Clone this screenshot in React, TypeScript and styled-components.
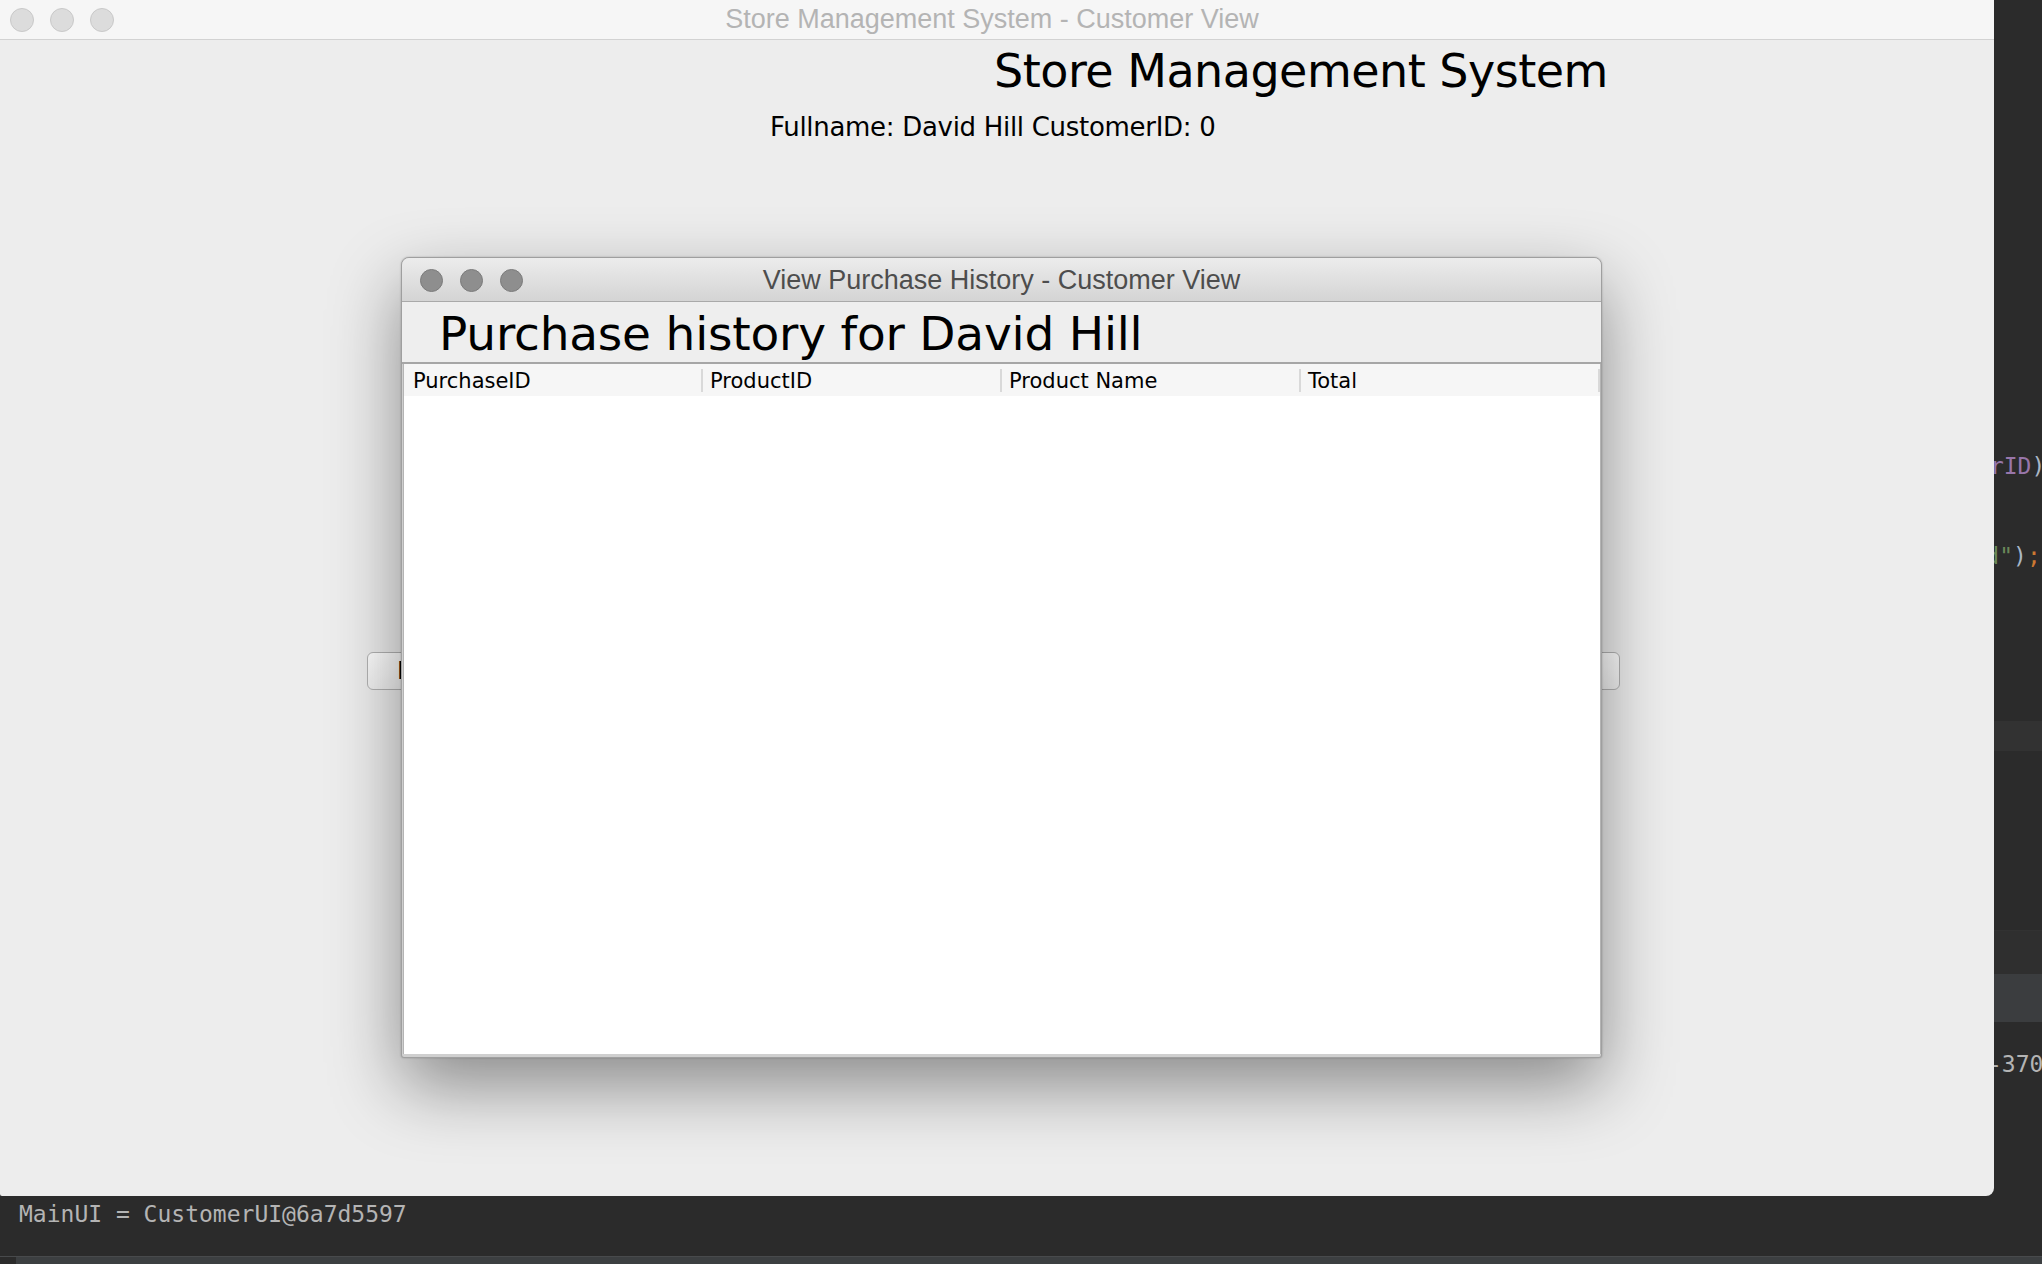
import React from "react";
import styled, { createGlobalStyle } from "styled-components";

const GlobalStyle = createGlobalStyle`
  html, body {
    margin: 0;
    padding: 0;
    width: 2042px;
    height: 1264px;
    overflow: hidden;
    background: #2b2b2b;
  }
  * { box-sizing: border-box; }
`;

/* ---------- desktop / IDE backdrop ---------- */

const Desktop = styled.div`
  position: relative;
  width: 2042px;
  height: 1264px;
  overflow: hidden;
  background: #2b2b2b;
  display: flex;
  flex-direction: column;
`;

const Editor = styled.div`
  height: 930px;
  padding-top: 31px;
  display: flex;
  flex-direction: column;
  overflow: hidden;
`;

const CodeLine = styled.div<{ $indent?: number; $current?: boolean }>`
  height: 30px;
  flex: none;
  line-height: 30px;
  padding-left: ${(p) => p.$indent ?? 0}px;
  white-space: pre;
  font-family: "DejaVu Sans Mono", "Liberation Mono", monospace;
  font-size: 23px;
  color: #a9b7c6;
  background: ${(p) => (p.$current ? "#323232" : "transparent")};
`;

const Tok = styled.span<{ $c: string }>`
  color: ${(p) => p.$c};
`;

const ToolHeader = styled.div`
  height: 44px;
  background: #2f2f2f;
  border-top: 1px solid #323232;
`;

const ToolBar = styled.div`
  height: 48px;
  background: #3b3d3f;
`;

const Console = styled.div`
  flex: 1;
  padding-top: 27px;
  display: flex;
  flex-direction: column;
  overflow: hidden;
`;

const ConsoleLine = styled.div<{ $indent?: number }>`
  height: 30px;
  flex: none;
  line-height: 30px;
  padding-left: ${(p) => p.$indent ?? 19}px;
  white-space: pre;
  font-family: "DejaVu Sans Mono", "Liberation Mono", monospace;
  font-size: 23px;
  color: #b4b4b4;
`;

const StatusBar = styled.div`
  height: 8px;
  background: #3c3f41;
  border-top: 1px solid #484a4c;
  display: flex;
`;

const StatusKnob = styled.div`
  width: 16px;
  background: #2b2b2b;
`;

/* ---------- windows ---------- */

const MainWindow = styled.div`
  position: absolute;
  left: 0;
  top: 0;
  width: 1994px;
  height: 1196px;
  background: #ededed;
  border-radius: 0 0 8px 2px;
  overflow: hidden;
  display: flex;
  flex-direction: column;
`;

const TitleBar = styled.div<{ $active?: boolean }>`
  position: relative;
  flex: none;
  height: ${(p) => (p.$active ? 44 : 40)}px;
  display: flex;
  align-items: center;
  justify-content: center;
  padding-top: ${(p) => (p.$active ? 2 : 0)}px;
  padding-right: ${(p) => (p.$active ? 0 : 10)}px;
  background: ${(p) =>
    p.$active ? "linear-gradient(#ececec, #d4d4d4)" : "#f6f6f6"};
  border-bottom: 1px solid ${(p) => (p.$active ? "#a9a9a9" : "#d2d2d2")};
  border-radius: ${(p) => (p.$active ? "7px 7px 0 0" : "0")};
`;

const Lights = styled.div<{ $active?: boolean }>`
  position: absolute;
  left: ${(p) => (p.$active ? 18 : 10)}px;
  top: ${(p) => (p.$active ? 2 : 0)}px;
  bottom: 0;
  display: flex;
  align-items: center;
  gap: ${(p) => (p.$active ? 17 : 16)}px;
`;

const Light = styled.span<{ $active?: boolean }>`
  width: ${(p) => (p.$active ? 23 : 24)}px;
  height: ${(p) => (p.$active ? 23 : 24)}px;
  border-radius: 50%;
  background: ${(p) => (p.$active ? "#8e8e8e" : "#dcdcdc")};
  border: 1px solid ${(p) => (p.$active ? "#7b7b7b" : "#c9c9c9")};
`;

const WindowTitle = styled.span<{ $active?: boolean }>`
  font-family: "Liberation Sans", Arial, sans-serif;
  font-size: 27px;
  color: ${(p) => (p.$active ? "#4d4d4d" : "#b4b4b4")};
  white-space: nowrap;
`;

const MainContent = styled.div`
  position: relative;
  flex: 1;
  display: flex;
  flex-direction: column;
  padding-top: 4px;
`;

const AppHeading = styled.h1`
  margin: 0;
  padding-left: 994px;
  font-family: "DejaVu Sans", Verdana, sans-serif;
  font-weight: normal;
  font-size: 46px;
  letter-spacing: -0.5px;
  line-height: 54px;
  color: #000;
  white-space: nowrap;
`;

const UserLine = styled.div`
  margin-top: 14px;
  padding-left: 770px;
  font-family: "DejaVu Sans", Verdana, sans-serif;
  font-size: 26px;
  letter-spacing: -0.3px;
  line-height: 30px;
  color: #000;
  white-space: nowrap;
`;

const ButtonRow = styled.div`
  margin-top: 510px;
  margin-left: 367px;
  width: 1253px;
  display: flex;
  gap: 12px;
`;

const Button = styled.button`
  flex: 1;
  height: 38px;
  padding: 0 0 0 29px;
  text-align: left;
  border: 1px solid #b3b3b3;
  border-radius: 6px;
  background: linear-gradient(#ffffff, #f1f1f1);
  font-family: "DejaVu Sans", Verdana, sans-serif;
  font-size: 24px;
  color: #000;
  white-space: nowrap;
  overflow: hidden;
`;

/* ---------- dialog ---------- */

const Dialog = styled.div`
  position: absolute;
  left: 401px;
  top: 217px;
  width: 1201px;
  height: 801px;
  display: flex;
  flex-direction: column;
  background: #cfcfcf;
  border: 1px solid #9f9f9f;
  border-radius: 8px 8px 3px 3px;
  box-shadow: 0 28px 70px rgba(0, 0, 0, 0.42), 0 0 2px rgba(0, 0, 0, 0.25);
`;

const DialogHeadingArea = styled.div`
  flex: none;
  height: 62px;
  padding: 5px 0 0 37px;
  background: #eeeeee;
  border-bottom: 2px solid #a6a6a6;
`;

const DialogHeading = styled.h2`
  margin: 0;
  font-family: "DejaVu Sans", Verdana, sans-serif;
  font-weight: normal;
  font-size: 47px;
  letter-spacing: -0.2px;
  line-height: 54px;
  color: #000;
  white-space: nowrap;
`;

const TablePanel = styled.div`
  flex: 1;
  margin: 0 0 3px 1px;
  display: flex;
  flex-direction: column;
  background: #ffffff;
  border-left: 1px solid #b4b4b4;
  border-right: 1px solid #b4b4b4;
`;

const HeaderRow = styled.div`
  height: 32px;
  flex: none;
  display: grid;
  grid-template-columns: repeat(4, 1fr);
  background: #f6f6f6;
`;

const HeaderCell = styled.div<{ $first?: boolean }>`
  position: relative;
  display: flex;
  align-items: center;
  padding-top: 2px;
  padding-left: ${(p) => (p.$first ? 9 : 7)}px;
  font-family: "DejaVu Sans", Verdana, sans-serif;
  font-size: 21px;
  color: #000;
  white-space: nowrap;

  &::after {
    content: "";
    position: absolute;
    right: 0;
    top: 5px;
    bottom: 4px;
    width: 2px;
    background: #d9d9d9;
  }
`;

const TableBody = styled.div`
  flex: 1;
  background: #ffffff;
`;

const editorLines: { indent?: number; current?: boolean; parts?: [string, string][] }[] =
  Array.from({ length: 31 }, (_, i) => {
    if (i === 14)
      return {
        indent: 1893,
        parts: [
          ["#9876aa", "customerID"],
          ["#a9b7c6", "));"],
        ],
      };
    if (i === 17)
      return {
        indent: 1473,
        parts: [
          ["#a9b7c6", "System.out.println("],
          ["#6a8759", "\"Purchase completed\""],
          ["#a9b7c6", ")"],
          ["#cc7832", ";"],
        ],
      };
    if (i === 23) return { current: true };
    return {};
  });

const columns = ["PurchaseID", "ProductID", "Product Name", "Total"];

export default function App() {
  return (
    <>
      <GlobalStyle />
      <Desktop>
        <Editor>
          {editorLines.map((l, i) => (
            <CodeLine key={i} $indent={l.indent} $current={l.current}>
              {l.parts?.map(([c, t], j) => (
                <Tok key={j} $c={c}>
                  {t}
                </Tok>
              ))}
            </CodeLine>
          ))}
        </Editor>
        <ToolHeader />
        <ToolBar />
        <Console>
          <ConsoleLine $indent={1988}>-370.0</ConsoleLine>
          <ConsoleLine />
          <ConsoleLine />
          <ConsoleLine />
          <ConsoleLine />
          <ConsoleLine>MainUI = CustomerUI@6a7d5597</ConsoleLine>
        </Console>
        <StatusBar>
          <StatusKnob />
        </StatusBar>

        <MainWindow>
          <TitleBar>
            <Lights>
              <Light />
              <Light />
              <Light />
            </Lights>
            <WindowTitle>Store Management System - Customer View</WindowTitle>
          </TitleBar>
          <MainContent>
            <AppHeading>Store Management System</AppHeading>
            <UserLine>Fullname: David Hill CustomerID: 0</UserLine>
            <ButtonRow>
              <Button>Browse Products</Button>
              <Button>Make Purchase</Button>
              <Button>View Purchase History</Button>
              <Button>Logout</Button>
            </ButtonRow>

            <Dialog>
              <TitleBar $active>
                <Lights $active>
                  <Light $active />
                  <Light $active />
                  <Light $active />
                </Lights>
                <WindowTitle $active>View Purchase History - Customer View</WindowTitle>
              </TitleBar>
              <DialogHeadingArea>
                <DialogHeading>Purchase history for David Hill</DialogHeading>
              </DialogHeadingArea>
              <TablePanel>
                <HeaderRow>
                  {columns.map((c, i) => (
                    <HeaderCell key={c} $first={i === 0}>
                      {c}
                    </HeaderCell>
                  ))}
                </HeaderRow>
                <TableBody />
              </TablePanel>
            </Dialog>
          </MainContent>
        </MainWindow>
      </Desktop>
    </>
  );
}
